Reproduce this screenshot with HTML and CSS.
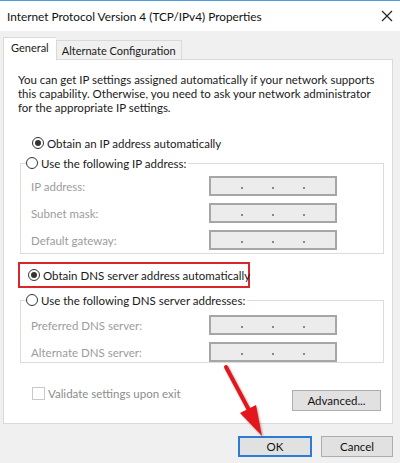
FILE: index.html
```html
<!DOCTYPE html>
<html>
<head>
<meta charset="utf-8">
<link rel="stylesheet" href="styles.css">
</head>
<body>
<div class="window">
  <div class="titlebar">
    <span class="title">Internet Protocol Version 4 (TCP/IPv4) Properties</span>
    <svg class="close" width="12" height="12" viewBox="0 0 12 12"><path d="M1 1 L11 11 M11 1 L1 11" stroke="#222" stroke-width="1.2" fill="none"/></svg>
  </div>
  <div class="body">
    <div class="tabs">
      <div class="tab active">General</div>
      <div class="tab">Alternate Configuration</div>
    </div>
    <div class="panel">
      <p class="intro">You can get IP settings assigned automatically if your network supports<br>this capability. Otherwise, you need to ask your network administrator<br>for the appropriate IP settings.</p>
      <div class="option auto-ip"><span class="radio checked"></span><span>Obtain an IP address automatically</span></div>
      <fieldset class="group ip-group">
        <legend><span class="radio"></span><span>Use the following IP address:</span></legend>
        <div class="row"><span class="label">IP address:</span><span class="ipfield"><i></i><i></i><i></i></span></div>
        <div class="row"><span class="label">Subnet mask:</span><span class="ipfield"><i></i><i></i><i></i></span></div>
        <div class="row"><span class="label">Default gateway:</span><span class="ipfield"><i></i><i></i><i></i></span></div>
      </fieldset>
      <div class="highlight"><div class="option"><span class="radio checked"></span><span>Obtain DNS server address automatically</span></div></div>
      <fieldset class="group dns-group">
        <legend><span class="radio"></span><span>Use the following DNS server addresses:</span></legend>
        <div class="row"><span class="label">Preferred DNS server:</span><span class="ipfield"><i></i><i></i><i></i></span></div>
        <div class="row"><span class="label">Alternate DNS server:</span><span class="ipfield"><i></i><i></i><i></i></span></div>
      </fieldset>
      <div class="footer">
        <div class="validate"><span class="checkbox"></span><span>Validate settings upon exit</span></div>
        <div class="btn advanced">Advanced...</div>
      </div>
    </div>
    <div class="buttons">
      <div class="btn ok">OK</div>
      <div class="btn cancel">Cancel</div>
    </div>
  </div>
  <svg class="arrow" width="400" height="463" viewBox="0 0 400 463">
    <defs>
      <filter id="sh" x="-20%" y="-20%" width="140%" height="140%">
        <feDropShadow dx="1" dy="1" stdDeviation="1" flood-color="#000" flood-opacity="0.35"/>
      </filter>
    </defs>
    <g filter="url(#sh)">
      <line x1="226" y1="367" x2="250" y2="412" stroke="#e3171b" stroke-width="4" stroke-linecap="round"/>
      <polygon points="240,413 256,405 262,436" fill="#e3171b"/>
    </g>
  </svg>
</div>
</body>
</html>
```
FILE: styles.css
```css
* { box-sizing: border-box; }
html, body { margin: 0; padding: 0; }
body {
  width: 400px;
  height: 463px;
  overflow: hidden;
  font-family: Lato, "Noto Sans", sans-serif;
  font-size: 11.5px;
  color: #1a1a1a;
  background: #f0f0f0;
}
.window {
  position: relative;
  width: 400px;
  height: 463px;
  background: #f0f0f0;
}
.titlebar {
  height: 31px;
  background: #fff;
  border-top: 1px solid #4d9be0;
  display: flex;
  align-items: center;
  justify-content: space-between;
  padding: 0 7px 0 7px;
}
.title {
  font-size: 11.8px;
  color: #111;
}
.body {
  padding: 6px 7px 0 3px;
}
.tabs {
  display: flex;
  align-items: flex-end;
  height: 22px;
  position: relative;
  z-index: 1;
}
.tab {
  border: 1px solid #d9d9d9;
  border-bottom: none;
  background: #f0f0f0;
  height: 19px;
  padding: 0 5px;
  display: flex;
  align-items: center;
  white-space: nowrap;
  font-size: 11px;
}
.tab.active {
  background: #fff;
  height: 23px;
  margin-bottom: -1px;
  padding: 0 7px 4px 7px;
  border-right: none;
}
.panel {
  background: #fff;
  border: 1px solid #d9d9d9;
  height: 365px;
  padding: 13px 14px 0 14px;
}
.intro {
  margin: 0;
  line-height: 14px;
  white-space: nowrap;
}
.option {
  display: flex;
  align-items: center;
  gap: 3px;
  height: 14px;
  white-space: nowrap;
}
.auto-ip {
  margin: 21px 0 0 14px;
}
.radio {
  width: 12px;
  height: 12px;
  border: 1px solid #333;
  border-radius: 50%;
  background: #fff;
  display: inline-flex;
  align-items: center;
  justify-content: center;
  flex: none;
}
.radio.checked::after {
  content: "";
  width: 6px;
  height: 6px;
  border-radius: 50%;
  background: #333;
}
.group {
  margin: 6px 0 0 2px;
  width: 364px;
  border: 1px solid #dcdcdc;
  padding: 6px 0 0 5px;
}
.group legend {
  padding: 0 2px 0 0;
  display: flex;
  align-items: center;
  gap: 3px;
  height: 14px;
  margin-left: 0;
  white-space: nowrap;
}
.row {
  display: flex;
  align-items: center;
  height: 20px;
  margin-bottom: 7px;
  padding-left: 5px;
  color: #9c9c9c;
}
.label { width: 178px; }
.ipfield {
  width: 128px;
  height: 20px;
  border: 2px solid #a6a6a6;
  background: #ececec;
  display: flex;
  justify-content: center;
  gap: 29px;
  align-items: flex-end;
  padding-bottom: 5px;
}
.ipfield i {
  width: 2px;
  height: 2px;
  background: #888;
  display: block;
}
.ip-group { height: 98px; }
.highlight {
  margin: 8px 0 0 0;
  width: 232px;
  height: 26px;
  border: 2px solid #d8262c;
  padding: 0 0 0 8px;
  display: flex;
  align-items: center;
}
.dns-group {
  margin-top: 5px;
  height: 70px;
  padding-top: 8px;
}
.footer {
  display: flex;
  justify-content: space-between;
  align-items: flex-start;
  margin-top: 26px;
  padding-left: 14px;
  width: 363px;
}
.validate {
  display: flex;
  align-items: center;
  gap: 3px;
  color: #8c8c8c;
  margin-top: -2px;
}
.checkbox {
  width: 13px;
  height: 13px;
  border: 1px solid #c8c8c8;
  background: #fff;
}
.btn {
  background: #e1e1e1;
  border: 1px solid #adadad;
  height: 21px;
  display: flex;
  align-items: center;
  justify-content: center;
  color: #111;
}
.advanced { width: 89px; margin-top: 1px; }
.buttons {
  display: flex;
  justify-content: flex-end;
  gap: 9px;
  margin-top: 12px;
}
.ok {
  width: 74px;
  border: 2px solid #2b7cd3;
}
.cancel { width: 72px; }
.arrow {
  position: absolute;
  left: 0;
  top: 0;
  pointer-events: none;
}
```
